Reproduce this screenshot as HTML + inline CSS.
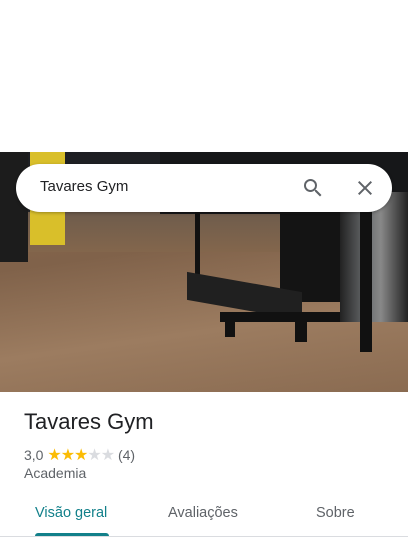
<!DOCTYPE html>
<html><head><meta charset="utf-8"><style>
body{margin:0;width:408px;height:544px;background:#fff;position:relative;overflow:hidden;font-family:"Liberation Sans",Arial,sans-serif}
.ph{position:absolute;left:0;top:152px;width:408px;height:240px;overflow:hidden;
background:linear-gradient(172deg,#8b6a4d 0%,#80624a 40%,#9c7c60 70%,#8a6b51 100%)}
.ab{position:absolute}
.sb{position:absolute;left:16px;top:164px;width:376px;height:48px;background:#fff;border-radius:24px;box-shadow:0 1px 3px rgba(0,0,0,.3)}
</style></head><body>
<div class="ph">
 <div class="ab" style="left:0;top:0;width:408px;height:80px;background:linear-gradient(#1d1e22,#2a2b2e)"></div>
 <div class="ab" style="left:0;top:60px;width:408px;height:40px;background:linear-gradient(#6e5c4c,#83664c)"></div>
 <div class="ab" style="left:30px;top:0;width:35px;height:93px;background:#d9bf2a"></div>
 <div class="ab" style="left:0;top:0;width:28px;height:110px;background:#1c1c1c"></div>
 <div class="ab" style="left:160px;top:0;width:248px;height:62px;background:#161719"></div>
 <div class="ab" style="left:195px;top:55px;width:130px;height:65px;border:5px solid #111;border-bottom:none"></div>
 <div class="ab" style="left:280px;top:40px;width:60px;height:110px;background:#141414"></div>
 <div class="ab" style="left:340px;top:40px;width:68px;height:130px;background:linear-gradient(90deg,#222,#6b6e70 40%,#888 60%,#222)"></div>
 <div class="ab" style="left:360px;top:60px;width:12px;height:140px;background:#111"></div>
 <div class="ab" style="left:187px;top:130px;width:115px;height:28px;background:#202020;transform:skewY(10deg)"></div>
 <div class="ab" style="left:220px;top:160px;width:120px;height:10px;background:#111"></div>
 <div class="ab" style="left:225px;top:165px;width:10px;height:20px;background:#111"></div>
 <div class="ab" style="left:295px;top:165px;width:12px;height:25px;background:#111"></div>
</div>
<div class="sb"></div>
<div class="ab" style="left:40px;top:178px;font-size:15px;color:#202124">Tavares Gym</div>
<svg class="ab" style="left:301px;top:176px" width="24" height="24" viewBox="0 0 24 24"><path fill="#5f6368" d="M15.5 14h-.79l-.28-.27A6.47 6.47 0 0016 9.5 6.5 6.5 0 109.5 16c1.61 0 3.09-.59 4.23-1.57l.27.28v.79l5 4.99L20.49 19l-4.99-5zm-6 0C7.01 14 5 11.99 5 9.5S7.01 5 9.5 5 14 7.01 14 9.5 11.99 14 9.5 14z"/></svg>
<svg class="ab" style="left:353px;top:176px" width="24" height="24" viewBox="0 0 24 24"><path fill="#5f6368" d="M19 6.41L17.59 5 12 10.59 6.41 5 5 6.41 10.59 12 5 17.59 6.41 19 12 13.41 17.59 19 19 17.59 13.41 12z"/></svg>
<div class="ab" style="left:24px;top:409px;font-size:22px;color:#202124">Tavares Gym</div>
<div class="ab" style="left:24px;top:445px;font-size:14px;color:#5f6368">3,0 <span style="color:#fbbc04;font-size:16px;letter-spacing:-1px">★★★</span><span style="color:#dadce0;font-size:16px;letter-spacing:-1px">★★</span> (4)</div>
<div class="ab" style="left:24px;top:465px;font-size:14px;color:#5f6368">Academia</div>
<div class="ab" style="left:35px;top:505px;font-size:14.5px;color:#12808a">Visão geral</div>
<div class="ab" style="left:168px;top:505px;font-size:14.5px;color:#5f6368">Avaliações</div>
<div class="ab" style="left:316px;top:505px;font-size:14.5px;color:#5f6368">Sobre</div>
<div class="ab" style="left:0;top:536px;width:408px;height:1px;background:#dadce0"></div>
<div class="ab" style="left:35px;top:533px;width:74px;height:3px;background:#12808a;border-radius:3px 3px 0 0"></div>
</body></html>
